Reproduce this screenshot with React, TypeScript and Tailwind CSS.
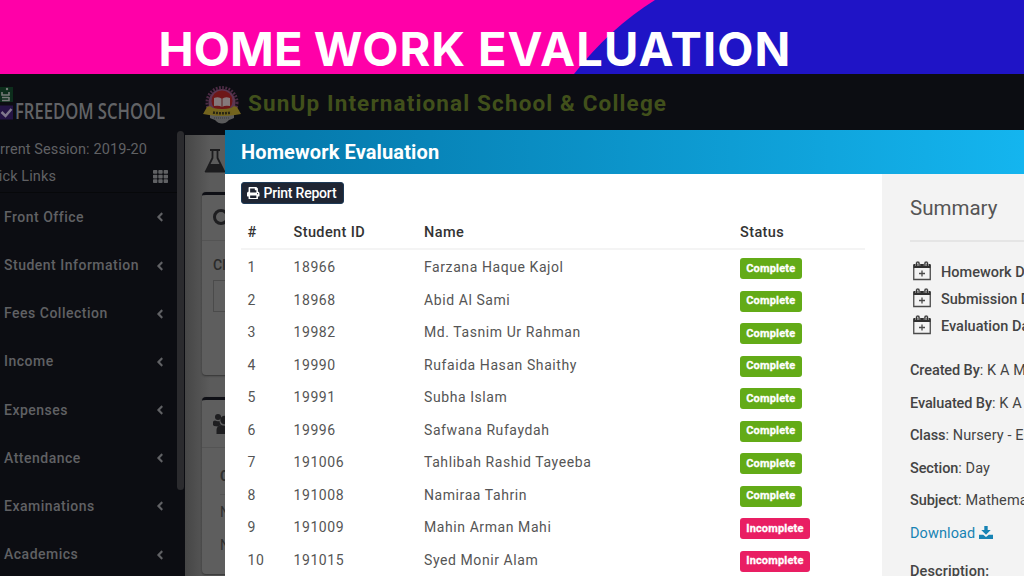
import type { ReactNode } from 'react';
import { FaPrint, FaAngleLeft, FaTh } from 'react-icons/fa';

const menu = ['Front Office', 'Student Information', 'Fees Collection', 'Income', 'Expenses', 'Attendance', 'Examinations', 'Academics'];

const students: { id: string; name: string; done: boolean }[] = [
  { id: '18966', name: 'Farzana Haque Kajol', done: true },
  { id: '18968', name: 'Abid Al Sami', done: true },
  { id: '19982', name: 'Md. Tasnim Ur Rahman', done: true },
  { id: '19990', name: 'Rufaida Hasan Shaithy', done: true },
  { id: '19991', name: 'Subha Islam', done: true },
  { id: '19996', name: 'Safwana Rufaydah', done: true },
  { id: '191006', name: 'Tahlibah Rashid Tayeeba', done: true },
  { id: '191008', name: 'Namiraa Tahrin', done: true },
  { id: '191009', name: 'Mahin Arman Mahi', done: false },
  { id: '191015', name: 'Syed Monir Alam', done: false },
];

const details: [string, string][] = [
  ['Created By', 'K A Mahmud'],
  ['Evaluated By', 'K A Mahmud'],
  ['Class', 'Nursery - English'],
  ['Section', 'Day'],
  ['Subject', 'Mathematics'],
];

function Banner() {
  return (
    <header className="relative h-[73.500px] shrink-0 overflow-hidden bg-[#ff00a8]">
      <svg className="absolute inset-0" width="1024" height="74" viewBox="0 0 1024 74">
        <path d="M655 0 Q610 28 574 74 H1024 V0Z" fill="#1f14c6" />
      </svg>
      <h1 className="relative pt-[25px] pl-[158.500px] font-['Inter'] text-[47px] leading-[48px] font-bold whitespace-nowrap text-white">
        <span className="tracking-[0.1px]">HOME </span>
        <span className="tracking-[0.9px]">WORK </span>
        <span className="tracking-[1.1px]">EVALUATION</span>
      </h1>
    </header>
  );
}

function Emblem() {
  return (
    <svg width="38" height="38" viewBox="0 0 38 38">
      <circle cx="19" cy="16.500" r="15" fill="none" stroke="#4c2b44" strokeWidth="3" strokeDasharray="1.8 1.4" />
      <circle cx="19" cy="16.500" r="13.500" fill="#5b3650" />
      <circle cx="19" cy="15" r="10.500" fill="#6e1718" />
      <path d="M7 27h24v5q-2 1-5 2-3 3.500-7 3.500T12 34q-3-1-5-2Z" fill="#5b5b5c" />
      <path d="M11 12q5-2 8 1 3-3 8-1v8q-5-1-8 1-3-2-8-1Z" fill="#85797b" />
      <path d="M19 13v8" stroke="#5c2022" strokeWidth="1" />
      <path d="M0 28l4-7 3-1 3 2q9 2 18 0l3-2 3 1 4 7-6 1q-13 2-26 0Z" fill="#74641e" />
      <path d="M10 26.500q9 1.500 18 0" stroke="#282513" strokeWidth="2.5" strokeDasharray="2 1" fill="none" />
      <path d="M11 32h16" stroke="#393a3b" strokeWidth="1" strokeDasharray="1 1" />
    </svg>
  );
}

function TopBar() {
  return (
    <div className="flex h-[61.500px] shrink-0 bg-[#0c0d12]">
      <div className="flex w-[185px] items-start">
        <svg className="mt-[13px] shrink-0" width="14" height="34" viewBox="0 0 14 34">
          <path d="M0 0h13v15H0Z" fill="#0d2e1c" />
          <path d="M2 5v3h7V5M9 10.500H2M9 10v3.500H2" stroke="#777b79" strokeWidth="1.600" fill="none" />
          <circle cx="7" cy="2" r="1.200" fill="#777b79" />
          <path d="M0 18.500h13v14H0Z" fill="#241444" />
          <path d="M1.500 25l4 4 6-7" stroke="#80788d" strokeWidth="2.500" fill="none" />
        </svg>
        <span className="mt-[22px] ml-[1px] origin-left scale-x-[0.772] font-['Open_Sans'] text-[21.5px] leading-[29px] font-semibold whitespace-nowrap text-[#626366]">
          FREEDOM SCHOOL
        </span>
      </div>
      <div className="flex items-start pt-[12px] pl-[18px]">
        <Emblem />
        <span className="ml-[7px] pt-[4px] text-[22.500px] leading-[26px] font-bold tracking-[1.13px] whitespace-nowrap text-[#41501b]">
          SunUp International School &amp; College
        </span>
      </div>
    </div>
  );
}

function Sidebar() {
  return (
    <aside className="flex w-[185px] shrink-0 bg-[#0c0d12]">
      <div className="w-[177px] overflow-hidden text-[14px] font-medium text-[#606164]">
        <div className="h-[58.250px] border-b border-[#07080a] pt-[1px]">
          <div className="flex h-[28px] w-[147px] items-center justify-end text-[14.5px] font-normal tracking-[0.1px] whitespace-nowrap">
            Current Session: 2019-20
          </div>
          <div className="flex h-[25px] items-center justify-between pr-[9px]">
            <span className="flex w-[56px] justify-end text-[14.500px] font-normal tracking-[0.1px] whitespace-nowrap">Quick Links</span>
            <FaTh size={15} />
          </div>
        </div>
        <nav>
          {menu.map((label) => (
            <div key={label} className="flex h-[48.2px] items-center justify-between pr-[10px] pl-[4px] tracking-[0.5px]">
              <span>{label}</span>
              <FaAngleLeft size={14} />
            </div>
          ))}
        </nav>
      </div>
      <div className="-mt-[4px] h-[359px] w-[7px] rounded-full bg-[#2b2b2e]" />
    </aside>
  );
}

function PageBehind() {
  return (
    <main className="grow overflow-hidden bg-linear-to-r from-[#464646] to-[#5b5b5b] to-[3%] pl-[17px]">
      <div className="h-[57px] pt-[13px] pl-[2px]">
        <svg width="24" height="26" viewBox="0 0 24 26">
          <path d="M6 2h10M8.500 2v8L2 23h18L13.500 10V2" fill="none" stroke="#1c1c1e" strokeWidth="1.8" />
          <path d="M6 16h10l5 8.500H1Z" fill="#1c1c1e" />
        </svg>
      </div>
      <section className="h-[183px] rounded border-t-3 border-[#0e0f15] bg-[#5e5e5e] shadow-[0_1px_2px_#333]">
        <div className="flex h-[46px] items-center border-b border-[#545454] pl-[11px]">
          <svg width="20" height="20" viewBox="0 0 20 20">
            <circle cx="8" cy="9" r="6.500" fill="none" stroke="#1e1e20" strokeWidth="3" />
          </svg>
        </div>
        <div className="pt-[15px] pl-[11px] text-[14px] leading-[18px] font-medium text-[#2a2a2a]">Cl</div>
        <div className="mt-[6px] ml-[11px] h-[32px] w-[200px] border border-[#4b4b4b]" />
      </section>
      <section className="mt-[22px] h-[177px] rounded border-t-3 border-[#0e0f15] bg-[#5e5e5e] shadow-[0_1px_2px_#333]">
        <div className="flex h-[48px] items-center border-b border-[#545454] pl-[11px]">
          <svg width="24" height="22" viewBox="0 0 24 22" fill="#1e1e20">
            <circle cx="5" cy="4" r="3" />
            <circle cx="11.500" cy="7" r="4.200" />
            <circle cx="19" cy="4" r="3" />
            <path d="M0 12V9q0-1.500 2-1.500 2 1.200 4.500.5 0 2.500 1.500 4Q6 12.500 5 13.500L1 13Z" />
            <path d="M3.500 21v-4q0-4 4.500-5 3.500 1.500 7 0 4.500 1 4.500 5v4Z" />
          </svg>
        </div>
        <div className="flex flex-col pl-[18px] text-[14px] leading-[20px] text-[#303030]">
          <span className="mt-[18px] h-[29px] w-[200px] border-b border-[#545454] font-bold">C</span>
          <span className="mt-[7px]">N</span>
          <span className="mt-[13px]">N</span>
        </div>
      </section>
    </main>
  );
}

function StatusBadge({ done }: { done: boolean }) {
  return (
    <span
      className={`flex h-[21px] items-center rounded-[3px] px-[6.250px] text-[11px] font-bold tracking-[0.17px] text-white [-webkit-text-stroke:0.3px_white] ${done ? 'bg-[#63ab17]' : 'bg-[#e91e63]'}`}
    >
      {done ? 'Complete' : 'Incomplete'}
    </span>
  );
}

function Columns({ children }: { children: ReactNode }) {
  return <div className="grid h-full grid-cols-[46px_130.500px_316px_1fr] items-center pl-[6.500px]">{children}</div>;
}

function CalendarIcon() {
  return (
    <svg className="shrink-0" width="18" height="20" viewBox="0 0 18 20" fill="none" stroke="#4a4a4a">
      <path d="M.75 4.500h16.500v14H.75Z" strokeWidth="1.3" />
      <path d="M.5 3h17v4H.5Z" fill="#303030" stroke="none" />
      <path d="M3.500 5V2.500q0-1.500 1.300-1.500t1.300 1.500V5M11.900 5V2.500q0-1.500 1.300-1.500t1.300 1.500V5" stroke="#c4c4c4" strokeWidth="2.200" />
      <path d="M3.500 5V2.500q0-1.500 1.300-1.500t1.300 1.500V5M11.900 5V2.500q0-1.500 1.300-1.500t1.300 1.500V5" stroke="#333" strokeWidth="1.200" />
      <path d="M9 9.500v6M6 12.500h6" strokeWidth="1.300" />
    </svg>
  );
}

function DownloadIcon() {
  return (
    <svg className="-mt-[3px]" width="14" height="13" viewBox="0 0 14 13" fill="currentColor">
      <path d="M5.300 0h3.400v4h3L7 8.700 2.300 4h3Z" />
      <path d="M0 8.800h4.200L7 11l2.800-2.200H14V13H0Z" />
    </svg>
  );
}

function Modal() {
  return (
    <div className="absolute top-[129.500px] left-[225px] flex h-[446.500px] w-[799px] flex-col overflow-hidden bg-white">
      <div className="flex h-[44px] shrink-0 items-center bg-linear-to-r from-[#0575a7] to-[#14b5ef] pl-[16px] text-[20px] font-bold tracking-[0.12px] text-white">
        Homework Evaluation
      </div>
      <div className="flex grow">
        <div className="w-[657px] shrink-0 pt-[8.500px] pr-[17px] pl-[16px]">
          <button className="flex h-[22px] w-[103px] items-center gap-[4px] rounded-[3px] border border-[#1d3a57] bg-[#1f2533] pl-[5px] text-[14px] font-medium tracking-[-0.22px] whitespace-nowrap text-white">
            <FaPrint size={12.500} className="shrink-0" />
            Print Report
          </button>
          <div className="mt-[11px] h-[35px] border-b-2 border-[#f4f4f4] pt-[2px] text-[14.500px] font-medium tracking-[0.4px] text-[#333]">
            <Columns>
              <span>#</span>
              <span>Student ID</span>
              <span>Name</span>
              <span>Status</span>
            </Columns>
          </div>
          <div className="pt-[1.500px] text-[14px] tracking-[0.58px] text-[#555]">
            {students.map((s, i) => (
              <div key={s.id} className="h-[32.530px]">
                <Columns>
                  <span>{i + 1}</span>
                  <span>{s.id}</span>
                  <span>{s.name}</span>
                  <span className="flex pt-[2px]">
                    <StatusBadge done={s.done} />
                  </span>
                </Columns>
              </div>
            ))}
          </div>
        </div>
        <aside className="grow overflow-hidden bg-[#f3f3f3] pl-[28px] text-[14.500px] whitespace-nowrap text-[#444]">
          <h2 className="flex h-[68px] items-center border-b-2 border-[#e5e5e5] pt-[3px] text-[20.500px] text-[#555]">Summary</h2>
          <div className="pt-[16px] font-medium">
            {['Homework Date', 'Submission Date', 'Evaluation Date'].map((label) => (
              <div key={label} className="flex h-[27px] items-center gap-[10px] pl-[3px]">
                <CalendarIcon />
                <span className="pt-[3px]">{label}</span>
              </div>
            ))}
          </div>
          <div className="mt-[16.500px] tracking-[0.1px]">
            {details.map(([label, value]) => (
              <div key={label} className="flex h-[32.500px] items-center">
                <span className="font-medium tracking-[-0.1px]">{label}</span>
                <span className="whitespace-pre">: {value}</span>
              </div>
            ))}
            <div className="flex h-[32.500px] items-center gap-[4px] text-[#1783b4]">
              Download
              <DownloadIcon />
            </div>
            <div className="pt-[10.500px] font-medium">Description:</div>
          </div>
        </aside>
      </div>
    </div>
  );
}

export default function App() {
  return (
    <div className="relative flex h-[576px] w-[1024px] flex-col overflow-hidden font-['Roboto',sans-serif]">
      <Banner />
      <TopBar />
      <div className="flex min-h-0 grow">
        <Sidebar />
        <PageBehind />
      </div>
      <Modal />
    </div>
  );
}
